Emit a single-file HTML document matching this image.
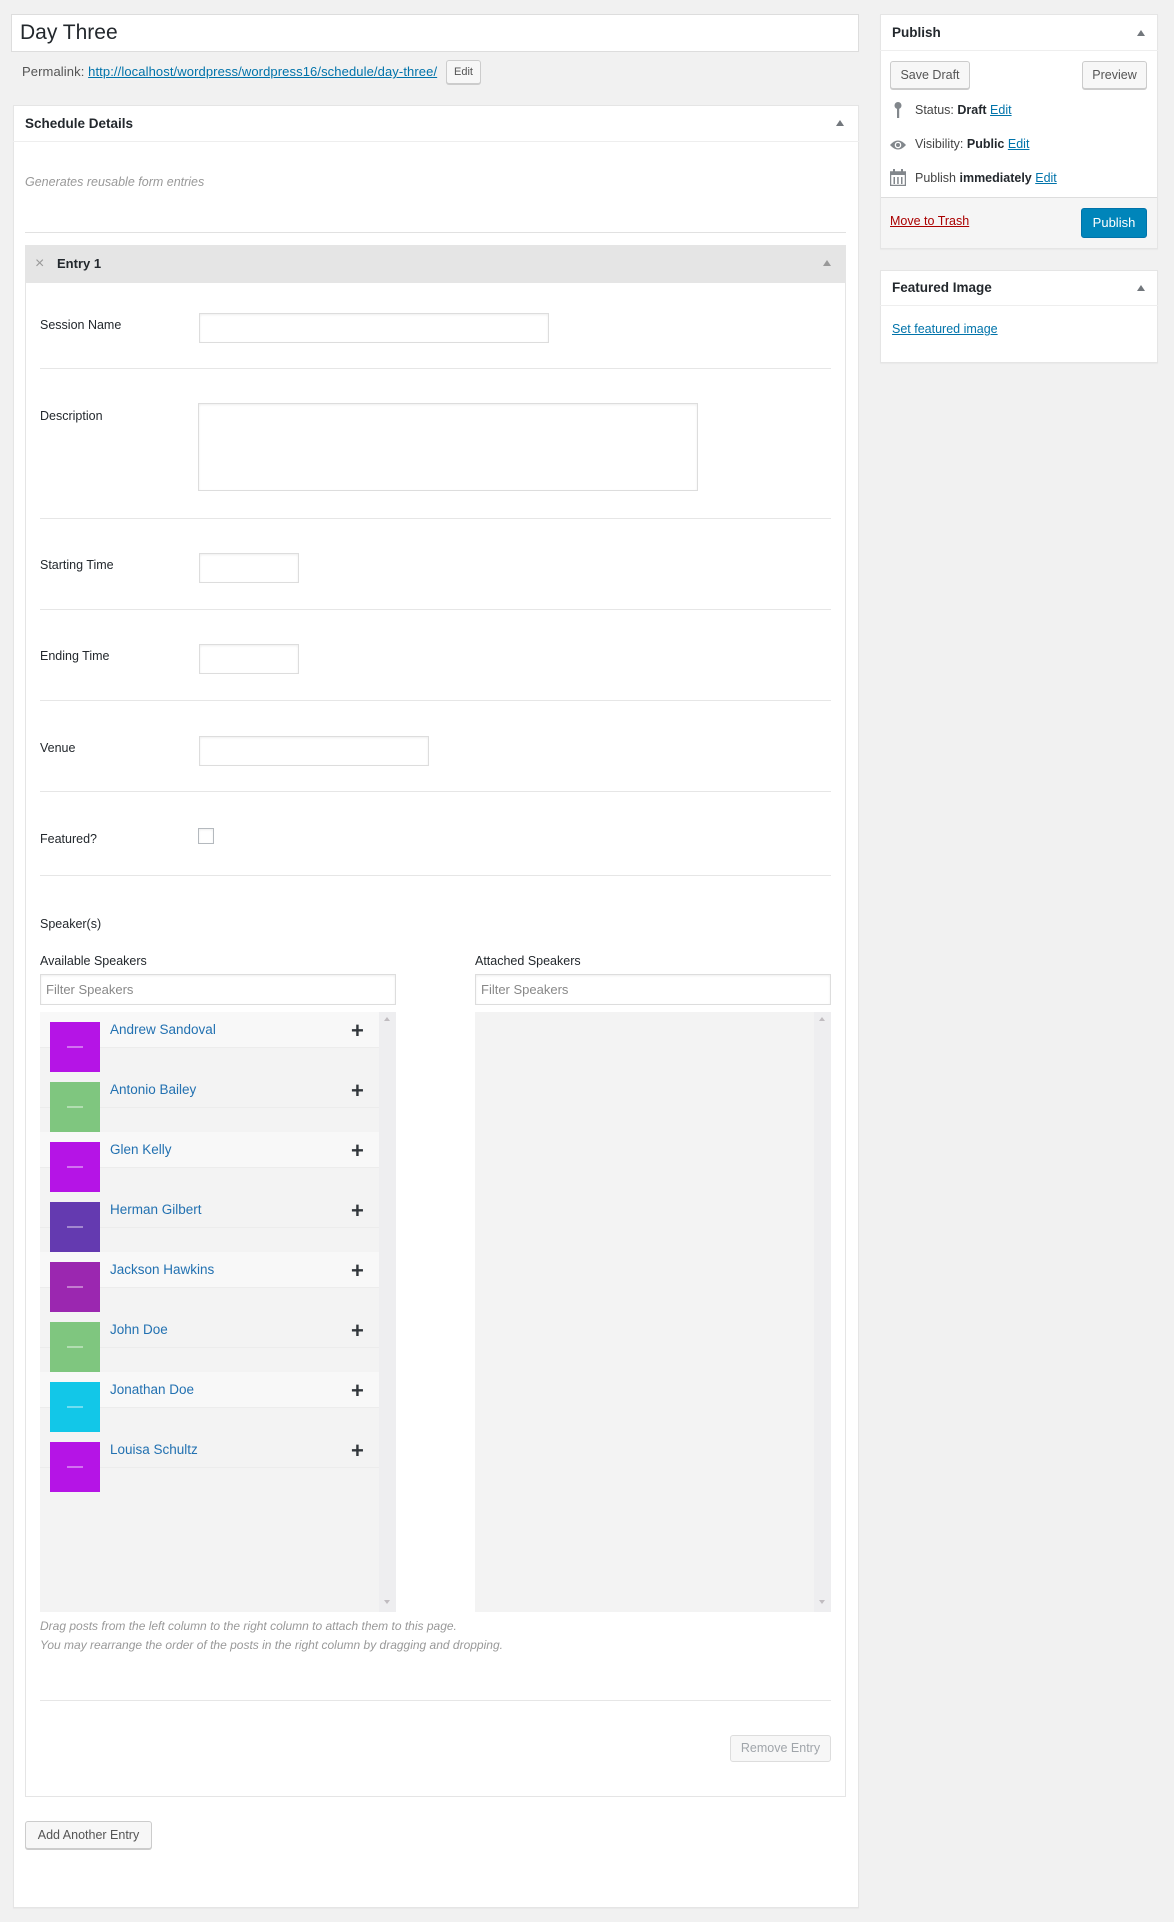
<!DOCTYPE html>
<html><head><meta charset="utf-8"><style>
*{box-sizing:border-box;margin:0;padding:0}
body{width:1174px;height:1922px;background:#f1f1f1;font-family:"Liberation Sans",sans-serif;font-size:13px;color:#23282d;position:relative;overflow:hidden}
.a{position:absolute}
.box{position:absolute;background:#fff;border:1px solid #e5e5e5;box-shadow:0 1px 1px rgba(0,0,0,.04)}
.inp{position:absolute;background:#fff;border:1px solid #ddd;box-shadow:inset 0 1px 2px rgba(0,0,0,.07)}
.sep{position:absolute;left:40px;width:791px;height:1px;background:#e6e6e6}
.lbl{position:absolute;left:40px;font-size:12.5px;color:#23282d}
.btn{position:absolute;background:#f7f7f7;border:1px solid #ccc;border-radius:3px;box-shadow:0 1px 0 #ccc;font-size:12.5px;color:#555;text-align:center}
.tri{position:absolute;width:0;height:0;border-left:4px solid transparent;border-right:4px solid transparent;border-bottom:6px solid #72777c}
a{color:#0073aa}
.row{position:absolute;left:40px;width:339px;height:60px}
.row .hd{position:absolute;left:0;top:0;width:339px;height:36px;border-bottom:1px solid #ececec}
.row .im{position:absolute;left:10px;top:10px;width:50px;height:50px}
.row .nm{position:absolute;left:70px;top:10px;font-size:13.5px;color:#2271b1}
.row .pl{position:absolute;left:311px;top:6px;font-size:22px;font-weight:bold;color:#32373c}
.row .im i{position:absolute;left:17px;top:24px;width:16px;height:2px;background:rgba(255,255,255,.4)}
</style></head><body>

<div class="a" style="left:11px;top:14px;width:848px;height:38px;background:#fff;border:1px solid #ddd"></div>
<div class="a" style="left:20px;top:21px;font-size:21px;color:#23282d">Day Three</div>
<div class="a" style="left:22px;top:64px;font-size:13px;color:#555;letter-spacing:0.1px">Permalink: <a href="#" style="color:#0073aa">http://localhost/wordpress/wordpress16/schedule/day-three/</a></div>
<div class="btn" style="left:446px;top:60px;width:35px;height:24px;font-size:11px;line-height:22px">Edit</div>

<div class="box" style="left:13px;top:105px;width:846px;height:1803px"></div>
<div class="a" style="left:13px;top:141px;width:846px;height:1px;background:#eee"></div>
<div class="a" style="left:25px;top:116px;font-size:13.5px;font-weight:bold">Schedule Details</div>
<div class="tri" style="left:836px;top:120px"></div>
<div class="a" style="left:25px;top:175px;font-size:12.5px;font-style:italic;color:#999">Generates reusable form entries</div>
<div class="a" style="left:25px;top:232px;width:821px;height:1px;background:#e1e1e1"></div>

<div class="a" style="left:25px;top:245px;width:821px;height:1552px;background:#fff;border:1px solid #e5e5e5"></div>
<div class="a" style="left:25px;top:245px;width:821px;height:38px;background:#e5e5e5"></div>
<div class="a" style="left:35px;top:255px;font-size:16px;color:#999">×</div>
<div class="a" style="left:57px;top:256px;font-size:13px;font-weight:bold">Entry 1</div>
<div class="tri" style="left:823px;top:260px;border-bottom-color:#999"></div>

<div class="lbl" style="top:318px">Session Name</div>
<div class="inp" style="left:199px;top:313px;width:350px;height:30px"></div>
<div class="sep" style="top:368px"></div>
<div class="lbl" style="top:409px">Description</div>
<div class="inp" style="left:198px;top:403px;width:500px;height:88px"></div>
<div class="sep" style="top:518px"></div>
<div class="lbl" style="top:558px">Starting Time</div>
<div class="inp" style="left:199px;top:553px;width:100px;height:30px"></div>
<div class="sep" style="top:609px"></div>
<div class="lbl" style="top:649px">Ending Time</div>
<div class="inp" style="left:199px;top:644px;width:100px;height:30px"></div>
<div class="sep" style="top:700px"></div>
<div class="lbl" style="top:741px">Venue</div>
<div class="inp" style="left:199px;top:736px;width:230px;height:30px"></div>
<div class="sep" style="top:791px"></div>
<div class="lbl" style="top:832px">Featured?</div>
<div class="inp" style="left:198px;top:828px;width:16px;height:16px;border-color:#b4b9be"></div>
<div class="sep" style="top:875px"></div>

<div class="lbl" style="top:917px">Speaker(s)</div>
<div class="lbl" style="top:954px">Available Speakers</div>
<div class="lbl" style="left:475px;top:954px">Attached Speakers</div>
<div class="inp" style="left:40px;top:974px;width:356px;height:31px"></div>
<div class="a" style="left:46px;top:982px;color:#888;font-size:13px">Filter Speakers</div>
<div class="inp" style="left:475px;top:974px;width:356px;height:31px"></div>
<div class="a" style="left:481px;top:982px;color:#888;font-size:13px">Filter Speakers</div>

<div class="a" style="left:40px;top:1012px;width:339px;height:600px;background:#f3f3f3"></div>
<div class="a" style="left:379px;top:1012px;width:17px;height:600px;background:#eeeef0"></div>
<div class="a" style="left:475px;top:1012px;width:339px;height:600px;background:#f3f3f3"></div>
<div class="a" style="left:814px;top:1012px;width:17px;height:600px;background:#eeeef0"></div>
<div class="tri" style="left:384px;top:1017px;border-bottom-color:#c0bcc0;border-left-width:3px;border-right-width:3px;border-bottom-width:4px"></div>
<div class="tri" style="left:819px;top:1017px;border-bottom-color:#c0bcc0;border-left-width:3px;border-right-width:3px;border-bottom-width:4px"></div>
<div class="a" style="left:384px;top:1600px;border-left:3px solid transparent;border-right:3px solid transparent;border-top:4px solid #c0bcc0"></div>
<div class="a" style="left:819px;top:1600px;border-left:3px solid transparent;border-right:3px solid transparent;border-top:4px solid #c0bcc0"></div>

<div class="row" style="top:1012px"><div class="hd" style="background:#f8f8f8"></div><div class="im" style="background:#b514e6"><i></i></div><div class="nm">Andrew Sandoval</div><div class="pl">+</div></div>
<div class="row" style="top:1072px"><div class="hd"></div><div class="im" style="background:#7fc67f"><i></i></div><div class="nm">Antonio Bailey</div><div class="pl">+</div></div>
<div class="row" style="top:1132px"><div class="hd" style="background:#f8f8f8"></div><div class="im" style="background:#b514e6"><i></i></div><div class="nm">Glen Kelly</div><div class="pl">+</div></div>
<div class="row" style="top:1192px"><div class="hd"></div><div class="im" style="background:#643ab0"><i></i></div><div class="nm">Herman Gilbert</div><div class="pl">+</div></div>
<div class="row" style="top:1252px"><div class="hd" style="background:#f8f8f8"></div><div class="im" style="background:#9b27b0"><i></i></div><div class="nm">Jackson Hawkins</div><div class="pl">+</div></div>
<div class="row" style="top:1312px"><div class="hd"></div><div class="im" style="background:#7fc67f"><i></i></div><div class="nm">John Doe</div><div class="pl">+</div></div>
<div class="row" style="top:1372px"><div class="hd" style="background:#f8f8f8"></div><div class="im" style="background:#12c7e8"><i></i></div><div class="nm">Jonathan Doe</div><div class="pl">+</div></div>
<div class="row" style="top:1432px"><div class="hd"></div><div class="im" style="background:#b514e6"><i></i></div><div class="nm">Louisa Schultz</div><div class="pl">+</div></div>

<div class="a" style="left:40px;top:1617px;font-size:12px;font-style:italic;color:#999;line-height:19px">Drag posts from the left column to the right column to attach them to this page.<br>You may rearrange the order of the posts in the right column by dragging and dropping.</div>
<div class="sep" style="top:1700px"></div>
<div class="btn" style="left:730px;top:1735px;width:101px;height:27px;line-height:25px;color:#a0a5aa;box-shadow:none;border-color:#ddd">Remove Entry</div>
<div class="btn" style="left:25px;top:1821px;width:127px;height:28px;line-height:26px;color:#555">Add Another Entry</div>

<div class="box" style="left:880px;top:14px;width:278px;height:235px"></div>
<div class="a" style="left:880px;top:50px;width:278px;height:1px;background:#eee"></div>
<div class="a" style="left:892px;top:25px;font-size:13.5px;font-weight:bold">Publish</div>
<div class="tri" style="left:1137px;top:30px"></div>
<div class="btn" style="left:890px;top:61px;width:80px;height:28px;line-height:26px">Save Draft</div>
<div class="btn" style="left:1082px;top:61px;width:65px;height:28px;line-height:26px">Preview</div>
<svg class="a" style="left:893px;top:101px" width="12" height="18" viewBox="0 0 12 18"><circle cx="5" cy="4.5" r="3.5" fill="#82878c"/><rect x="4" y="6" width="2.2" height="11" fill="#82878c"/></svg>
<div class="a" style="left:915px;top:103px;font-size:12.5px;color:#444">Status: <b style="font-weight:600;color:#23282d">Draft</b> <a href="#">Edit</a></div>
<svg class="a" style="left:889px;top:138px" width="18" height="14" viewBox="0 0 18 14"><path d="M1 7 Q9 -2 17 7 Q9 16 1 7Z" fill="#82878c"/><circle cx="9" cy="7" r="3.3" fill="#fff"/><circle cx="9" cy="7" r="2" fill="#82878c"/></svg>
<div class="a" style="left:915px;top:137px;font-size:12.5px;color:#444">Visibility: <b style="font-weight:600;color:#23282d">Public</b> <a href="#">Edit</a></div>
<svg class="a" style="left:890px;top:169px" width="16" height="17" viewBox="0 0 16 17"><rect x="0.5" y="3" width="15" height="13.5" fill="none" stroke="#82878c" stroke-width="1.5"/><rect x="0.5" y="3" width="15" height="3" fill="#82878c"/><rect x="3" y="0" width="2" height="4" fill="#82878c"/><rect x="11" y="0" width="2" height="4" fill="#82878c"/><rect x="3.5" y="8" width="1.5" height="7" fill="#82878c"/><rect x="7.2" y="8" width="1.5" height="7" fill="#82878c"/><rect x="11" y="8" width="1.5" height="7" fill="#82878c"/></svg>
<div class="a" style="left:915px;top:171px;font-size:12.5px;color:#444">Publish <b style="font-weight:600;color:#23282d">immediately</b> <a href="#">Edit</a></div>
<div class="a" style="left:881px;top:197px;width:276px;height:51px;background:#f5f5f5;border-top:1px solid #ddd"></div>
<div class="a" style="left:890px;top:214px;font-size:12.5px"><a href="#" style="color:#a00">Move to Trash</a></div>
<div class="a" style="left:1081px;top:208px;width:66px;height:30px;background:#0085ba;border:1px solid #0073aa;border-radius:3px;color:#fff;font-size:13px;text-align:center;line-height:28px">Publish</div>

<div class="box" style="left:880px;top:270px;width:278px;height:93px"></div>
<div class="a" style="left:880px;top:305px;width:278px;height:1px;background:#eee"></div>
<div class="a" style="left:892px;top:280px;font-size:13.5px;font-weight:bold">Featured Image</div>
<div class="tri" style="left:1137px;top:285px"></div>
<div class="a" style="left:892px;top:322px;font-size:12.5px"><a href="#">Set featured image</a></div>

</body></html>
